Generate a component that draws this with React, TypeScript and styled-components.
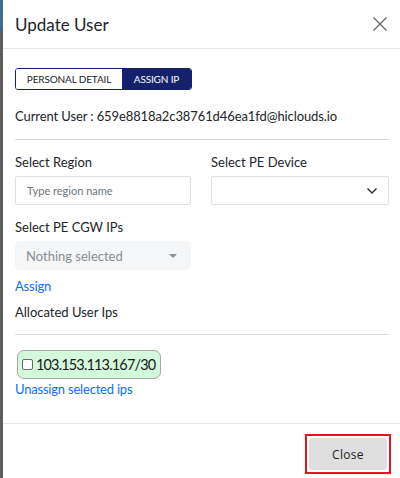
import React, { useState } from 'react';
import styled, { createGlobalStyle } from 'styled-components';

const GlobalStyle = createGlobalStyle`
  html, body {
    margin: 0;
    padding: 0;
    background: #5f6368;
    font-family: Lato, "Open Sans", sans-serif;
  }
  * { box-sizing: border-box; }
`;

const Backdrop = styled.div`
  display: flex;
  width: 400px;
  height: 478px;
  overflow: hidden;
  background: linear-gradient(#3a6f8f 0 30px, #5c5c5c 30px);
`;

const Modal = styled.div`
  margin-left: 3px;
  flex: 1;
  display: flex;
  flex-direction: column;
  background: #ffffff;
  color: #212529;
`;

const Header = styled.div`
  height: 49px;
  flex-shrink: 0;
  display: flex;
  align-items: center;
  justify-content: space-between;
  padding: 0 10px 0 12px;
  border-bottom: 1px solid #e4e6ea;
`;

const Title = styled.h5`
  margin: 0;
  font-size: 17px;
  font-weight: 400;
  color: #212529;
`;

const CloseX = styled.button`
  border: none;
  background: none;
  padding: 0;
  width: 20px;
  height: 20px;
  display: flex;
  align-items: center;
  justify-content: center;
  cursor: pointer;
`;

const Body = styled.div`
  flex: 1;
  padding: 19px 11px 0 12px;
  display: flex;
  flex-direction: column;
`;

const Tabs = styled.div`
  display: flex;
  width: 177px;
  height: 22px;
  border: 1px solid #15226b;
  border-radius: 3px;
  overflow: hidden;
`;

const Tab = styled.button<{ $active?: boolean }>`
  border: none;
  margin: 0;
  padding: 0 9px;
  font-family: Lato, sans-serif;
  font-size: 10px;
  letter-spacing: -0.15px;
  text-transform: uppercase;
  background: ${(p) => (p.$active ? '#15226b' : '#ffffff')};
  color: ${(p) => (p.$active ? '#ffffff' : '#212529')};
  flex: ${(p) => (p.$active ? '0 0 69px' : '1')};
  cursor: pointer;
`;

const CurrentUser = styled.div`
  margin-top: 17px;
  font-size: 13px;
  letter-spacing: -0.1px;
  line-height: 18px;
`;

const Rule = styled.hr`
  border: none;
  border-top: 1px solid #d6d8db;
  margin: 0;
`;

const FieldGrid = styled.div`
  display: grid;
  grid-template-columns: 176px 178px;
  column-gap: 20px;
  row-gap: 14px;
`;

const Field = styled.div`
  display: flex;
  flex-direction: column;
  gap: 6px;
`;

const Label = styled.label`
  font-size: 13px;
  line-height: 16px;
`;

const TextInput = styled.input`
  height: 29px;
  width: 100%;
  border: 1px solid #dee2e6;
  border-radius: 2px;
  padding: 0 11px;
  font-family: Lato, sans-serif;
  font-size: 11px;
  color: #212529;
  &::placeholder { color: #6c757d; }
  outline: none;
`;

const SelectBox = styled.div<{ $disabled?: boolean }>`
  height: 29px;
  width: 100%;
  border: 1px solid ${(p) => (p.$disabled ? '#f4f5f7' : '#dee2e6')};
  border-radius: ${(p) => (p.$disabled ? '5px' : '2px')};
  background: ${(p) => (p.$disabled ? '#f5f6f8' : '#ffffff')};
  display: flex;
  align-items: center;
  justify-content: space-between;
  padding: 0 10px 0 10px;
  font-size: 13px;
  color: #8a8d91;
`;

const Caret = styled.span`
  width: 0;
  height: 0;
  border-left: 4px solid transparent;
  border-right: 4px solid transparent;
  border-top: 4px solid #8d9094;
  margin-right: 3px;
`;

const LinkText = styled.a`
  color: #0d6efd;
  font-size: 13px;
  letter-spacing: -0.2px;
  line-height: 16px;
  text-decoration: none;
  cursor: pointer;
`;

const Chip = styled.label`
  align-self: flex-start;
  margin-left: 2px;
  display: flex;
  align-items: center;
  gap: 2px;
  height: 29px;
  padding: 0 5px 0 4px;
  background: #d4f8db;
  border: 1px solid #a6aaa6;
  border-radius: 7px;
  font-size: 14.5px;
  letter-spacing: -0.85px;
  color: #1a1a1a;
  cursor: pointer;
`;

const Box = styled.span`
  width: 11px;
  height: 11px;
  border: 1px solid #6b6b6b;
  border-radius: 2px;
  background: #fff;
  margin-right: 1px;
`;

const Footer = styled.div`
  height: 55px;
  flex-shrink: 0;
  border-top: 1px solid #e4e6ea;
  display: flex;
  justify-content: flex-end;
  align-items: flex-start;
  padding: 10px 9px 0 0;
`;

const CloseButton = styled.button`
  width: 86px;
  height: 40px;
  border: 2px solid #e8131f;
  padding: 2px;
  background: #fff;
  cursor: pointer;
`;

const CloseInner = styled.span`
  display: flex;
  align-items: center;
  justify-content: center;
  height: 100%;
  border-radius: 4px;
  background: #dedede;
  font-family: "Open Sans", Lato, sans-serif;
  font-size: 12px;
  font-weight: 500;
  letter-spacing: 0.3px;
  color: #222;
`;

const Spacer = styled.div<{ $h: number }>`
  height: ${(p) => p.$h}px;
  flex-shrink: 0;
`;

export default function App() {
  const [tab, setTab] = useState('assign');

  return (
    <>
      <GlobalStyle />
      <Backdrop>
        <Modal>
          <Header>
            <Title>Update User</Title>
            <CloseX aria-label="close">
              <svg width="16" height="16" viewBox="0 0 16 16">
                <path d="M1.5 1.5 L14.5 14.5 M14.5 1.5 L1.5 14.5" stroke="#6a6a6a" strokeWidth="1.4" />
              </svg>
            </CloseX>
          </Header>
          <Body>
            <Tabs>
              <Tab $active={tab === 'personal'} onClick={() => setTab('personal')}>Personal Detail</Tab>
              <Tab $active={tab === 'assign'} onClick={() => setTab('assign')}>Assign IP</Tab>
            </Tabs>
            <CurrentUser>Current User : 659e8818a2c38761d46ea1fd@hiclouds.io</CurrentUser>
            <Spacer $h={14} />
            <Rule />
            <Spacer $h={14} />
            <FieldGrid>
              <Field>
                <Label>Select Region</Label>
                <TextInput placeholder="Type region name" />
              </Field>
              <Field>
                <Label>Select PE Device</Label>
                <SelectBox>
                  <span />
                  <svg width="12" height="8" viewBox="0 0 12 8">
                    <path d="M1.5 1.5 L6 6 L10.5 1.5" fill="none" stroke="#333" strokeWidth="1.5" />
                  </svg>
                </SelectBox>
              </Field>
              <Field>
                <Label>Select PE CGW IPs</Label>
                <SelectBox $disabled>
                  <span>Nothing selected</span>
                  <Caret />
                </SelectBox>
              </Field>
            </FieldGrid>
            <Spacer $h={8} />
            <LinkText>Assign</LinkText>
            <Spacer $h={10} />
            <Label>Allocated User Ips</Label>
            <Spacer $h={14} />
            <Rule />
            <Spacer $h={15} />
            <Chip>
              <Box />
              103.153.113.167/30
            </Chip>
            <Spacer $h={2} />
            <LinkText>Unassign selected ips</LinkText>
          </Body>
          <Footer>
            <CloseButton>
              <CloseInner>Close</CloseInner>
            </CloseButton>
          </Footer>
        </Modal>
      </Backdrop>
    </>
  );
}
